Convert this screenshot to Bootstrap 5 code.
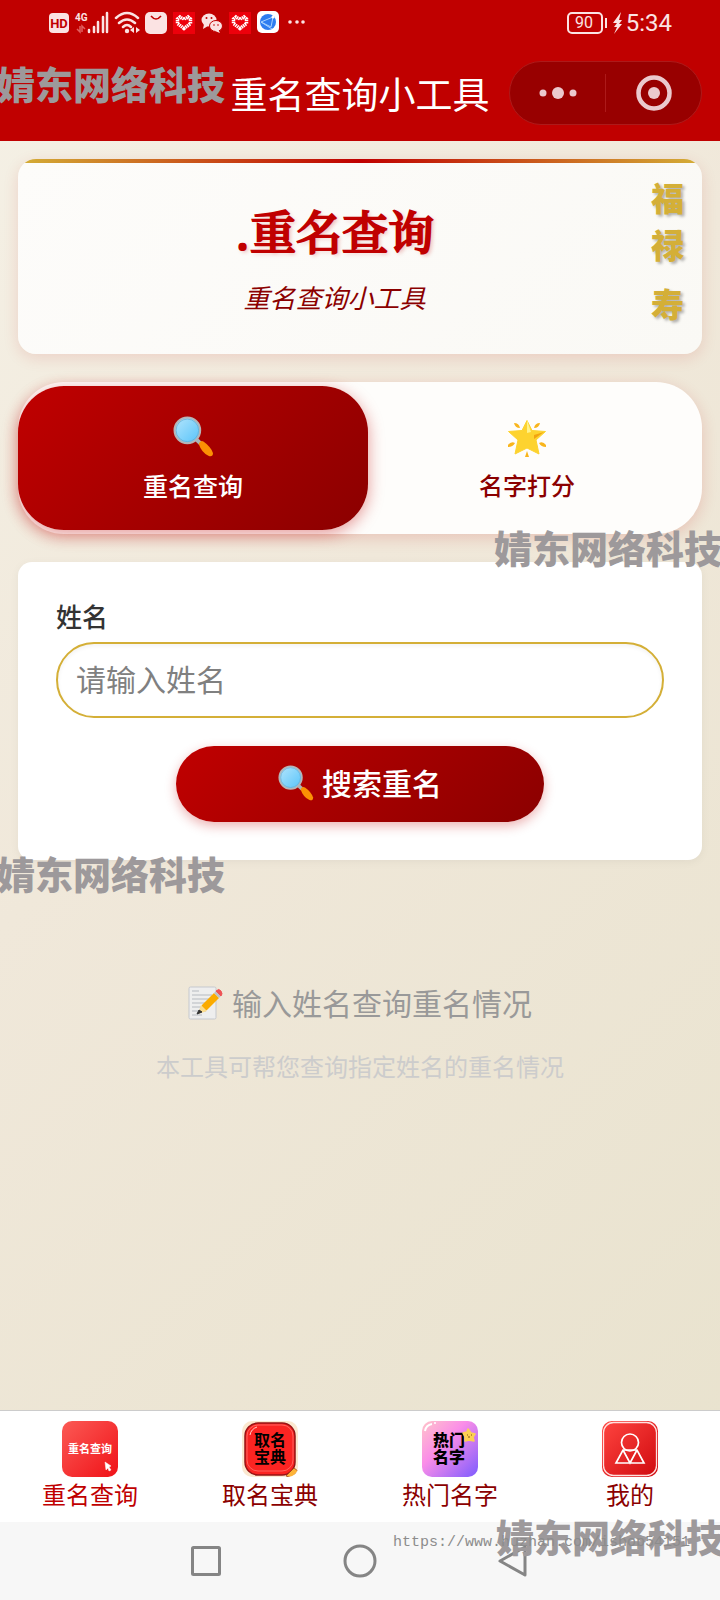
<!DOCTYPE html>
<html lang="zh-CN">
<head>
<meta charset="utf-8">
<meta name="viewport" content="width=device-width, initial-scale=1">
<title>重名查询小工具</title>
<link rel="stylesheet" href="https://cdn.jsdelivr.net/npm/bootstrap@5.3.0/dist/css/bootstrap.min.css">
<script src="https://cdn.jsdelivr.net/npm/bootstrap@5.3.0/dist/js/bootstrap.bundle.min.js"></script>
<style>
  :root { --red: #c00000; --dark-red: #8b0000; --gold: #d4af37; }
  body {
    font-family: "Noto Sans CJK SC", "Noto Sans", sans-serif;
    background: linear-gradient(135deg, #f5f1e6 0%, #f0e8da 40%, #e8e2cd 100%);
    color: #333; line-height: 1.5;
  }
  svg { display: block; flex-shrink: 0; }
  .top-area { background: var(--red); }
  .status-row { height: 44px; padding: 2px 48px 0; color: #fbe3e3; }
  .clock { font: 24px/32px "Roboto", sans-serif; }
  .title-row { height: 97px; padding: 0 18px; }
  .app-title { font-size: 37px; line-height: 48px; font-weight: 400; }
  .side { flex: 1 1 0; min-width: 0; }
  .capsule { width: 193px; height: 64px; border: 1px solid #ad1a1a; background: #980000; }
  .capsule button { flex: 1; height: 38px; background: none; border: 0; padding: 0; }
  .capsule button + button { border-left: 1px solid #ad1a1a; }
  .content-area { padding: 18px; }
  .hero { height: 195px; border-radius: 18px; background: linear-gradient(135deg, #fdfcfa, #faf9f5); box-shadow: 0 4px 16px rgba(192,0,0,.12); padding: 0 17px 0 0; }
  .hero::before { content: ""; height: 4px; margin-right: -17px; background: linear-gradient(90deg, var(--gold), var(--red), var(--gold)); }
  .hero-text { padding-top: 34px; }
  .hero h1 { font-family: "Noto Serif CJK SC", "Noto Sans CJK SC", serif; font-size: 46px; line-height: 64px; font-weight: 500; -webkit-text-stroke: 2px var(--red); color: var(--red); text-shadow: 2px 2px 4px rgba(192,0,0,.3); }
  .hero p { font-size: 26px; line-height: 40px; font-weight: 400; font-style: italic; color: var(--dark-red); }
  .luck { width: 34px; padding-top: 11px; color: var(--gold); font-size: 33px; line-height: 47px; font-weight: 900; text-shadow: 2px 2px 3px rgba(0,0,0,.3); }
  .luck span:last-child { padding-top: 12px; }
  .mode-tabs { margin-top: 28px; padding: 8px; height: 152px; border-radius: 46px; background: #fefdfb; box-shadow: 0 4px 16px rgba(192,0,0,.16); }
  .mode-tabs button { flex: 0 0 50%; border: 0; background: none; border-radius: 46px; color: var(--dark-red); font-size: 24px; line-height: 36px; font-weight: 500; gap: 10px; padding: 3px 0 0; }
  .mode-tabs button.active { flex-basis: calc(50% + 16px); margin: -4px -8px; background: linear-gradient(135deg, #c00000, #8b0000); color: #fff; font-size: 25px; box-shadow: 0 4px 16px rgba(192,0,0,.4); }
  .query-card { margin-top: 28px; padding: 34px 38px 38px; border-radius: 14px; background: #fff; box-shadow: 0 2px 10px rgba(0,0,0,.05); }
  .query-card label { font-size: 26px; line-height: 40px; font-weight: 500; }
  .name-input { height: 76px; margin-top: 6px; border: 2px solid var(--gold); border-radius: 38px; padding: 0 18px 4px; font-size: 30px; box-shadow: inset 0 2px 4px rgba(0,0,0,.05); }
  .name-input::placeholder { color: #808080; }
  .search-btn { width: 60.5%; height: 76px; margin-top: 28px; padding-bottom: 4px; border: 0; border-radius: 38px; background: linear-gradient(135deg, #c00000, #8b0000); color: #fff; font-size: 30px; font-weight: 500; box-shadow: 0 4px 12px rgba(192,0,0,.3); }
  .empty-note { margin-top: 118px; font-size: 30px; line-height: 48px; color: #999; }
  .empty-hint { margin-top: 22px; font-size: 24px; line-height: 36px; color: #ccc; }
  .tab-bar { height: 112px; border-top: 1px solid #ccc; background: #fff; padding-top: 10px; }
  .tab-bar a { color: var(--dark-red); font-size: 24px; line-height: 34px; text-decoration: none; }
  .tab-bar a.active { color: var(--red); }
  .tab-bar svg { border-radius: 10px; font-family: "Noto Sans CJK SC", sans-serif; }
  .system-bar { height: 78px; background: #f7f7f7; }
  .system-bar button { border: 0; background: none; padding: 0; width: 34px; }
  .brand-mark { position: absolute; z-index: 5; font-size: 38px; line-height: 44px; font-weight: 900; color: #9d999b; white-space: nowrap; pointer-events: none; }
  .site-url { position: absolute; z-index: 6; right: 30px; top: 11px; font: 15px/20px "Liberation Mono", monospace; color: #8c8c8c; text-decoration: none; }
</style>
</head>
<body class="min-vh-100 d-flex flex-column overflow-x-hidden">

<svg width="0" height="0" class="position-absolute" aria-hidden="true">
  <defs>
    <linearGradient id="lens" x1="0" y1="0" x2="1" y2="1"><stop offset="0" stop-color="#b5e5fc"/><stop offset="1" stop-color="#55c3fa"/></linearGradient>
    <linearGradient id="redTile" x1="0" y1="0" x2="1" y2="1"><stop offset="0" stop-color="#fb5a55"/><stop offset="1" stop-color="#f01218"/></linearGradient>
    <linearGradient id="deepTile" x1="0" y1="0" x2="1" y2="1"><stop offset="0" stop-color="#ff4540"/><stop offset="1" stop-color="#cf090e"/></linearGradient>
    <linearGradient id="pinkTile" x1="0" y1="0" x2="1" y2="1"><stop offset="0" stop-color="#ffc4c9"/><stop offset=".4" stop-color="#fa8de8"/><stop offset="1" stop-color="#7d5bff"/></linearGradient>
    <symbol id="magnifier" viewBox="0 0 40 40">
      <path d="M23 23l4 4" stroke="#a9b4ba" stroke-width="4"/>
      <path d="M25 27q2-4 5-2 7 5 9 11 0 4-4 3-7-3-10-12z" fill="#fb9104"/>
      <circle cx="14" cy="14" r="12.500" fill="url(#lens)" stroke="#b5b5b8" stroke-width="2"/>
      <circle cx="14" cy="14" r="11" fill="none" stroke="#63abd0" stroke-width=".7"/>
    </symbol>
    <symbol id="heart" viewBox="0 0 22 22">
      <rect width="22" height="22" fill="#ed000b"/>
      <path d="M11 16.500L4.500 11.500V7L7 5l4 2.500 4-2.500 2.500 2v4.500z" fill="none" stroke="#fff" stroke-width="3.500" stroke-dasharray="1.500 .6"/>
      <path d="M11 13L7.500 9.500l1.500-1.500 2 1 2-1 1.500 1.500z" fill="#ed000b"/>
    </symbol>
  </defs>
</svg>

<header class="top-area position-relative text-white">
  <div class="status-row d-flex align-items-center justify-content-between">
    <svg width="258" height="26" viewBox="0 0 258 26" aria-hidden="true">
      <rect x="1" y="3" width="20" height="20" rx="4" fill="#fbe3e3"/>
      <text x="11" y="18" text-anchor="middle" font-family="Roboto" font-size="13" font-weight="700" fill="#c00000">HD</text>
      <text x="27" y="11" font-family="Roboto" font-size="10" font-weight="700" fill="#fbe3e3">4G</text>
      <path d="M32 16v6l-3-3M34 22v-6l3 3" stroke="#e06060" stroke-width="1.500" fill="none"/>
      <path d="M41 20v2M46 17v5M50 12v10M55 7v15M59 3v19" stroke="#fbe3e3" stroke-width="2.500" stroke-linecap="round"/>
      <path d="M68 8q11-10 22 0M71 13q8-7 16 0M75 17q4-4 8 0" stroke="#fbe3e3" stroke-width="2.500" fill="none" stroke-linecap="round"/>
      <circle cx="79" cy="21" r="2.200" fill="#fbe3e3"/><path d="M86 17v6l-4-3zM88 17v6l4-3z" fill="#fbe3e3"/>
      <rect x="97" y="2" width="22" height="22" rx="5" fill="#fbe3e3"/><path d="M103 6q5 6 10 0" fill="none" stroke="#c00000" stroke-width="1.500"/>
      <use href="#heart" x="125" y="2" width="22" height="22"/>
      <ellipse cx="161" cy="10" rx="7.500" ry="6.500" fill="#fbe3e3"/><path d="M156 14l-1 5 5-3z" fill="#fbe3e3"/>
      <ellipse cx="168" cy="16" rx="6.500" ry="5.500" fill="#fbe3e3" stroke="#c00000"/><path d="M170 19l2 4-5-2z" fill="#fbe3e3"/>
      <g fill="#c00000"><circle cx="158.500" cy="8" r="1"/><circle cx="163.500" cy="8" r="1"/><circle cx="166" cy="15" r=".8"/><circle cx="170" cy="15" r=".8"/></g>
      <use href="#heart" x="181" y="2" width="22" height="22"/>
      <rect x="209" y="1" width="22" height="22" rx="5" fill="#fff"/><circle cx="220" cy="12" r="8" fill="#2e7df0"/>
      <path d="M213 12l12-5-2 10-10-5 11 7" fill="none" stroke="#a9d3ff"/><circle cx="225" cy="7" r="1.500" fill="#fff"/>
      <g fill="#fbe3e3"><circle cx="242" cy="12" r="1.800"/><circle cx="249" cy="12" r="1.800"/><circle cx="255" cy="12" r="1.800"/></g>
    </svg>
    <div class="d-flex align-items-center">
      <svg width="60" height="26" viewBox="0 0 60 26" role="img" aria-label="电量 90">
        <rect x="2" y="3" width="34" height="20" rx="4" fill="none" stroke="#fbe3e3" stroke-width="2"/>
        <text x="18" y="18" text-anchor="middle" font-family="Roboto" font-size="16" fill="#fbe3e3">90</text>
        <rect x="39" y="8" width="2" height="10" fill="#fbe3e3"/>
        <path d="M55 2l-8 11h4l-3 4h3l-3 7 8-10h-3l3-4h-3z" fill="#fbe3e3"/>
      </svg>
      <span class="clock">5:34</span>
    </div>
  </div>
  <div class="title-row d-flex align-items-center">
    <div class="side"></div>
    <h1 class="app-title m-0">重名查询小工具</h1>
    <div class="side d-flex justify-content-end">
      <div class="capsule rounded-pill d-flex align-items-center flex-shrink-0">
        <button type="button" aria-label="更多" class="d-flex align-items-center justify-content-center">
          <svg width="38" height="14" viewBox="0 0 38 14" fill="#ebc9cd"><circle cx="4" cy="7" r="3.500"/><circle cx="19" cy="7" r="6"/><circle cx="34" cy="7" r="3.500"/></svg>
        </button>
        <button type="button" aria-label="关闭" class="d-flex align-items-center justify-content-center">
          <svg width="36" height="36" viewBox="0 0 36 36"><circle cx="18" cy="18" r="15.500" fill="none" stroke="#ebc9cd" stroke-width="4.500"/><circle cx="18" cy="18" r="6" fill="#ebc9cd"/></svg>
        </button>
      </div>
    </div>
  </div>
  <span class="brand-mark" style="left:-3px;top:61px">婧东网络科技</span>
</header>

<main class="content-area flex-grow-1">
  <section class="hero overflow-hidden d-flex flex-column">
    <div class="d-flex flex-grow-1">
      <div class="hero-text flex-grow-1 text-center">
        <h1 class="mb-0">.重名查询</h1>
        <p class="mb-0 mt-3">重名查询小工具</p>
      </div>
      <div class="luck d-flex flex-column"><span>福</span><span>禄</span><span>寿</span></div>
    </div>
  </section>

  <nav class="mode-tabs d-flex position-relative">
    <button type="button" class="active d-flex flex-column align-items-center justify-content-center">
      <svg width="41" height="41"><use href="#magnifier"/></svg>重名查询
    </button>
    <button type="button" class="d-flex flex-column align-items-center justify-content-center">
      <svg width="40" height="40" viewBox="0 0 40 40"><path d="M20 3.500l5 10 13.500 1L29 23l3 14-12-6-12 6 3-14L1.500 14.500l13.500-1z" fill="#fdd32f" stroke="#fdd32f" stroke-linejoin="round"/><path d="M20 3l4 12-4 1z" fill="#fff38a"/><path d="M37 15l-10 7v-4z" fill="#f2a411"/><path d="M7 6q5 0 6 5-5 0-6-5M33 6q-5 0-6 5 5 0 6-5M1 28q3-4 7-2-2 4-7 4zM39 28q-3-4-7-2 2 4 7 4zM20 34l2 6h-4z" fill="#f9b51c"/></svg>名字打分
    </button>
    <span class="brand-mark" style="right:-20px;top:143px">婧东网络科技</span>
  </nav>

  <form class="query-card position-relative" onsubmit="return false">
    <label for="person" class="d-block">姓名</label>
    <input id="person" class="name-input form-control" type="text" placeholder="请输入姓名">
    <button type="submit" class="search-btn mx-auto d-flex align-items-center justify-content-center gap-2"><svg width="36" height="36"><use href="#magnifier"/></svg>搜索重名</button>
    <span class="brand-mark" style="left:-21px;bottom:-35px">婧东网络科技</span>
  </form>

  <section class="text-center">
    <p class="empty-note mb-0 d-flex align-items-center justify-content-center gap-2">
      <svg width="36" height="36" viewBox="0 0 36 36"><rect x="1" y="3" width="27" height="32" rx="1.500" fill="#eee" stroke="#c5c8ce"/><path d="M4 7h7M4 11h20M4 15h20M4 19h20M4 23h17M4 27h14M4 31h10" stroke="#b5b9c0" stroke-width="1.200"/><path d="M11 29l3-8 12-12 5 5-12 12z" fill="#fbab00"/><path d="M26 9l2-2 5 5-2 2z" fill="#bfc2c8"/><path d="M28 7q3-3 5 0t0 5z" fill="#ee5355" stroke="#ee5355"/><path d="M13 21l6 6-9 3z" fill="#fbdc8d"/><path d="M11 26l3 2-5 2z" fill="#333" stroke="#333"/></svg>输入姓名查询重名情况
    </p>
    <p class="empty-hint mb-0">本工具可帮您查询指定姓名的重名情况</p>
  </section>
</main>

<nav class="tab-bar d-flex">
  <a href="#" class="active w-25 d-flex flex-column align-items-center">
    <svg width="56" height="56" viewBox="0 0 56 56"><rect width="56" height="56" fill="url(#redTile)"/><text x="28" y="32" text-anchor="middle" font-size="11" font-weight="700" fill="#fff">重名查询</text><path d="M43 41l6 4-2 1 2 3-2 1-1-3-2 2z" fill="#fff" stroke="#fff" stroke-width=".5"/></svg>重名查询</a>
  <a href="#" class="w-25 d-flex flex-column align-items-center">
    <svg width="56" height="56" viewBox="0 0 56 56"><rect width="56" height="56" fill="#fbe8d0"/><rect x="3" y="2" width="50" height="52" rx="13" fill="#fb2422" stroke="#971315" stroke-width="1.500"/><rect x="5" y="4" width="46" height="46" rx="11" fill="none" stroke="#ff8079" stroke-width=".7"/><path d="M8 14q1-6 7-8" stroke="#ffd0c8" fill="none"/><text x="28" y="25" text-anchor="middle" font-size="16" font-weight="700">取名</text><text x="28" y="42" text-anchor="middle" font-size="16" font-weight="700">宝典</text><path d="M44 55l8-8 4 3-6 7z" fill="#fdb338" stroke="#943512" stroke-width=".7"/></svg>取名宝典</a>
  <a href="#" class="w-25 d-flex flex-column align-items-center">
    <svg width="56" height="56" viewBox="0 0 56 56"><rect width="56" height="56" fill="url(#pinkTile)"/><path d="M3 10q1-6 7-7" stroke="#fff" stroke-width="2" fill="none"/><circle cx="13" cy="2" r="1" fill="#fff"/><text x="27" y="25" text-anchor="middle" font-size="16" font-weight="900">热门</text><text x="27" y="42" text-anchor="middle" font-size="16" font-weight="900">名字</text><path d="M46 8l3 4 4 1-2 3 1 4-5-1-4 1v-4l-2-4 4-1z" fill="#fdd052" stroke="#fdd052" stroke-width="1.500" stroke-linejoin="round"/><path d="M45 14h1M49 14h1M46 16h2" stroke="#805015"/></svg>热门名字</a>
  <a href="#" class="w-25 d-flex flex-column align-items-center">
    <svg width="56" height="56" viewBox="0 0 56 56"><rect width="56" height="56" fill="url(#deepTile)"/><rect x="1.500" y="1.500" width="53" height="53" rx="10" fill="none" stroke="#ffe1df" stroke-width="1.300"/><g fill="none" stroke="#fff" stroke-width="1.700"><circle cx="28" cy="21.500" r="8.500"/><path d="M21 29h14l7 13H14zM21 29l7 13 7-13"/></g></svg>我的</a>
</nav>

<footer class="system-bar position-relative d-flex align-items-center">
  <div class="d-flex align-items-center justify-content-between w-50 mx-auto px-2">
    <button type="button" aria-label="最近任务"><svg width="34" height="34" viewBox="0 0 34 34"><rect x="4.500" y="3.500" width="27" height="27" rx="1" fill="none" stroke="#858585" stroke-width="3"/></svg></button>
    <button type="button" aria-label="主页"><svg width="34" height="34" viewBox="0 0 34 34"><circle cx="17" cy="17" r="15" fill="none" stroke="#858585" stroke-width="3"/></svg></button>
    <button type="button" aria-label="返回"><svg width="34" height="34" viewBox="0 0 34 34"><path d="M27 3v28L2 17z" fill="none" stroke="#858585" stroke-width="3" stroke-linejoin="round"/></svg></button>
  </div>
  <span class="brand-mark" style="right:-4px;top:-8px">婧东网络科技</span>
  <a class="site-url" href="#">https://www.huzhan.com/ishop54151</a>
</footer>
</body>
</html>
